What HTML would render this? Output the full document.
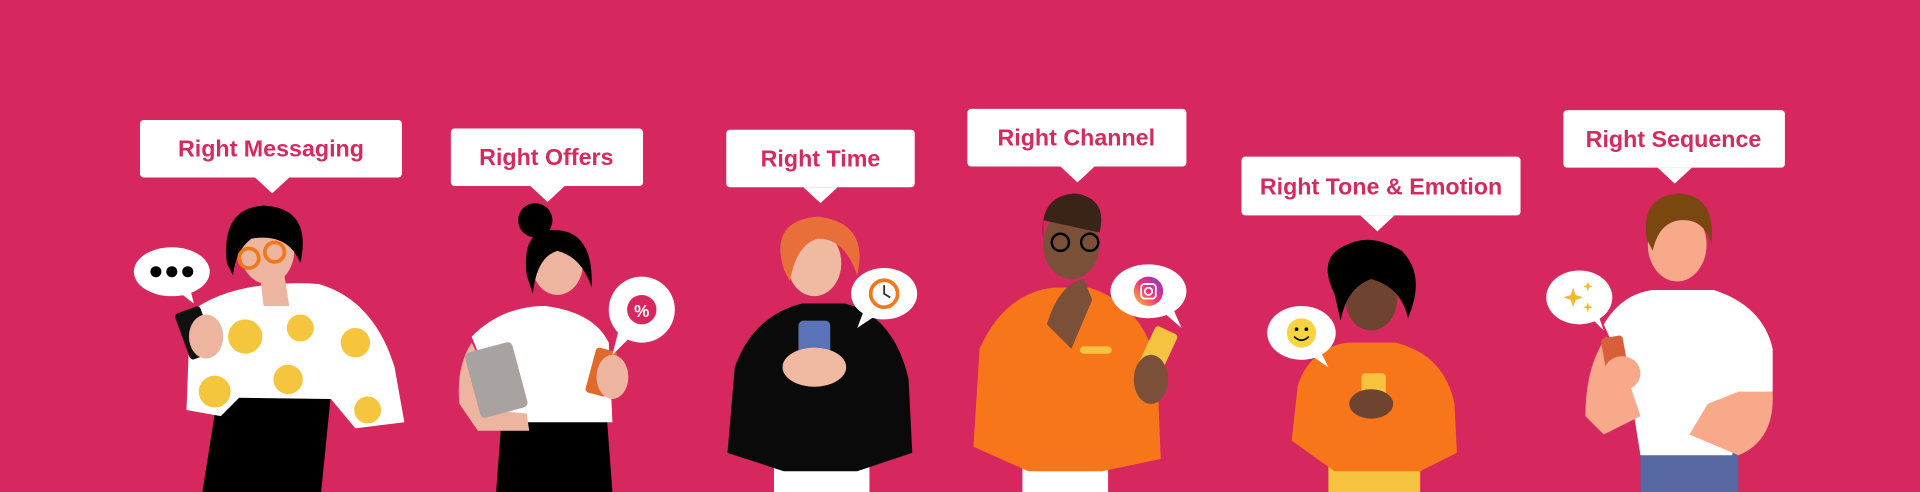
<!DOCTYPE html>
<html><head><meta charset="utf-8"><style>
html,body{margin:0;padding:0;background:#D6275F;width:1920px;height:492px;overflow:hidden}
svg{display:block}
text{font-family:"Liberation Sans",sans-serif;font-weight:bold;fill:#D42A5E;font-size:19px;text-anchor:middle}
</style></head><body>
<svg width="1920" height="492" viewBox="0 0 1568 402" xmlns="http://www.w3.org/2000/svg">
<rect width="1568" height="402" fill="#D6275F"/>
<defs>
<linearGradient id="ig" x1="0" y1="1" x2="1" y2="0"><stop offset="0" stop-color="#FDC830"/><stop offset=".5" stop-color="#F3307A"/><stop offset="1" stop-color="#7A3BD0"/></linearGradient>
</defs>
<!-- labels -->
<g fill="#fff">
<rect x="114" y="98" width="214" height="47" rx="3"/><path d="M208 145h28l-14 13z"/>
<rect x="368" y="105" width="157" height="47" rx="3"/><path d="M433 152h28l-14 13z"/>
<rect x="593" y="106" width="154" height="47" rx="3"/><path d="M656 153h28l-14 13z"/>
<rect x="790" y="89" width="179" height="47" rx="3"/><path d="M866 136h28l-14 13z"/>
<rect x="1014" y="128" width="228" height="48" rx="3"/><path d="M1111 176h28l-14 13z"/>
<rect x="1277" y="90" width="181" height="47" rx="3"/><path d="M1354 137h28l-14 13z"/>
</g>
<text x="221" y="128">Right Messaging</text>
<text x="446" y="135">Right Offers</text>
<text x="670" y="136">Right Time</text>
<text x="879" y="119">Right Channel</text>
<text x="1128" y="159">Right Tone &amp; Emotion</text>
<text x="1367" y="120">Right Sequence</text>

<!-- Figure 1 -->
<path d="M165 402 L178 320 L270 322 L262 402z" fill="#000"/>
<path d="M155 255 Q190 228 260 232 Q305 245 322 300 L330 345 L290 350 L270 326 L195 325 L180 340 L152 335z" fill="#fff"/>
<g fill="#F6C53E"><circle cx="200" cy="275" r="14"/><circle cx="245" cy="268" r="11"/><circle cx="290" cy="280" r="12"/><circle cx="175" cy="320" r="13"/><circle cx="235" cy="310" r="12"/><circle cx="300" cy="335" r="11"/></g>
<path d="M212 225 L232 225 L236 250 L215 250z" fill="#EDB5A0"/>
<ellipse cx="218" cy="205" rx="22" ry="27" fill="#EDB5A0"/>
<path d="M185 215 Q180 170 215 168 Q255 170 245 215 Q235 190 205 195 Q192 205 190 225z" fill="#000"/>
<circle cx="203" cy="211" r="8" fill="none" stroke="#F2771A" stroke-width="3"/><circle cx="224" cy="206" r="8" fill="none" stroke="#F2771A" stroke-width="3"/>
<rect x="148" y="252" width="22" height="40" rx="3" fill="#111" transform="rotate(-20 159 272)"/>
<ellipse cx="168" cy="275" rx="14" ry="18" fill="#EDB5A0"/>
<ellipse cx="140" cy="222" rx="31" ry="20" fill="#fff"/><path d="M145 238 L158 248 L155 236z" fill="#fff"/>
<g fill="#000"><circle cx="127" cy="222" r="4.5"/><circle cx="140" cy="222" r="4.5"/><circle cx="153" cy="222" r="4.5"/></g>

<!-- Figure 2 -->
<path d="M405 402 L410 335 L495 335 L500 402z" fill="#000"/>
<path d="M385 275 Q410 250 445 250 Q485 255 497 280 L500 345 L405 345 L395 300z" fill="#fff"/>
<path d="M375 330 Q372 300 385 280 L395 300 L400 335 L430 338 L432 352 L390 352z" fill="#EDB5A0"/>
<rect x="385" y="283" width="40" height="55" rx="4" fill="#A8A3A0" transform="rotate(-15 405 310)"/>
<ellipse cx="455" cy="215" rx="21" ry="26" fill="#EDB5A0"/>
<path d="M430 225 Q425 185 455 188 Q485 190 483 235 Q475 210 455 205 Q438 210 435 240z" fill="#000"/>
<circle cx="437" cy="180" r="14" fill="#000"/>
<rect x="482" y="285" width="18" height="38" rx="3" fill="#E06A2C" transform="rotate(15 491 304)"/>
<ellipse cx="500" cy="308" rx="13" ry="18" fill="#EDB5A0"/>
<circle cx="524" cy="253" r="27" fill="#fff"/><path d="M505 270 L500 290 L515 275z" fill="#fff"/>
<circle cx="524" cy="253" r="12" fill="#D6275F"/><text x="524" y="259" style="fill:#fff;font-size:14px">%</text>

<!-- Figure 3 -->
<rect x="632" y="372" width="78" height="30" fill="#fff"/>
<path d="M600 300 Q615 258 655 248 L690 248 Q730 258 742 310 L745 370 L700 385 L640 385 L594 370z" fill="#0A0A0A"/>
<ellipse cx="665" cy="215" rx="22" ry="27" fill="#F0B9A2"/>
<path d="M640 220 Q628 180 668 177 Q710 182 700 225 Q690 195 668 195 Q650 200 645 230z" fill="#E86F3A"/>
<rect x="652" y="262" width="26" height="42" rx="4" fill="#5972B8"/>
<ellipse cx="665" cy="300" rx="26" ry="16" fill="#F0B9A2"/>
<ellipse cx="722" cy="240" rx="27" ry="21" fill="#fff"/><path d="M705 255 L700 268 L715 258z" fill="#fff"/>
<circle cx="722" cy="240" r="11" fill="#fff" stroke="#F2771A" stroke-width="3"/><path d="M722 233v7l5 3" stroke="#333" stroke-width="1.5" fill="none"/>

<!-- Figure 4 -->
<rect x="835" y="375" width="70" height="27" fill="#fff"/>
<path d="M800 285 Q820 240 860 235 L890 235 Q935 250 945 300 L948 375 L900 385 L840 385 L795 365z" fill="#F7761A"/>
<rect x="882" y="283" width="26" height="6" rx="3" fill="#F5C340"/>
<ellipse cx="875" cy="200" rx="23" ry="28" fill="#7A5038"/>
<path d="M852 195 Q848 160 878 158 Q905 162 898 190 L852 180z" fill="#3A2418"/>
<circle cx="866" cy="198" r="7" fill="none" stroke="#000" stroke-width="2"/><circle cx="890" cy="198" r="7" fill="none" stroke="#000" stroke-width="2"/>
<path d="M855 265 Q865 232 885 228 L892 245 L875 285z" fill="#7A5038"/>
<rect x="935" y="268" width="20" height="40" rx="3" fill="#F5C340" transform="rotate(25 945 288)"/>
<ellipse cx="940" cy="310" rx="14" ry="20" fill="#7A5038"/>
<ellipse cx="938" cy="238" rx="31" ry="22" fill="#fff"/><path d="M950 255 L965 268 L958 252z" fill="#fff"/>
<circle cx="938" cy="238" r="12" fill="url(#ig)"/><rect x="932" y="232" width="12" height="12" rx="3" fill="none" stroke="#fff" stroke-width="1.5"/><circle cx="938" cy="238" r="3" fill="none" stroke="#fff" stroke-width="1.5"/>

<!-- Figure 5 -->
<rect x="1085" y="378" width="75" height="24" fill="#F5C340"/>
<path d="M1060 315 Q1070 285 1100 280 L1140 280 Q1180 290 1188 330 L1190 370 L1160 385 L1090 385 L1055 360z" fill="#F7761A"/>
<ellipse cx="1120" cy="245" rx="21" ry="25" fill="#6E4430"/>
<path d="M1090 240 Q1075 210 1100 200 Q1120 190 1145 205 Q1165 225 1150 260 Q1145 235 1120 228 Q1100 235 1095 262z" fill="#000"/>
<rect x="1112" y="305" width="20" height="32" rx="3" fill="#F5C340"/>
<ellipse cx="1120" cy="330" rx="18" ry="12" fill="#6E4430"/>
<ellipse cx="1063" cy="272" rx="28" ry="22" fill="#fff"/><path d="M1070 290 L1085 300 L1078 286z" fill="#fff"/>
<circle cx="1063" cy="272" r="12" fill="#F7D440"/><circle cx="1059" cy="269" r="1.5" fill="#000"/><circle cx="1067" cy="269" r="1.5" fill="#000"/><path d="M1057 275 Q1063 281 1069 275" stroke="#000" stroke-width="1.3" fill="none"/>

<!-- Figure 6 -->
<rect x="1340" y="368" width="80" height="34" fill="#5768A0"/>
<path d="M1310 265 Q1325 240 1350 237 L1400 237 Q1440 250 1448 285 L1448 320 L1420 325 L1415 372 L1340 372 L1330 310z" fill="#fff"/>
<path d="M1295 340 Q1295 300 1312 275 L1330 310 L1340 340 L1310 355z" fill="#F7A98A"/>
<path d="M1420 320 L1448 320 Q1450 360 1420 372 L1380 355 L1395 330z" fill="#F7A98A"/>
<ellipse cx="1370" cy="200" rx="24" ry="30" fill="#F7A98A"/>
<path d="M1345 195 Q1340 160 1372 158 Q1402 160 1398 200 Q1392 178 1372 180 Q1355 182 1350 205z" fill="#7A4710"/>
<rect x="1310" y="275" width="18" height="32" rx="3" fill="#D7603A" transform="rotate(-10 1319 291)"/>
<ellipse cx="1325" cy="305" rx="15" ry="14" fill="#F7A98A"/>
<ellipse cx="1290" cy="243" rx="27" ry="22" fill="#fff"/><path d="M1300 260 L1310 270 L1305 256z" fill="#fff"/>
<path d="M1285 235 l2 6 6 2 -6 2 -2 6 -2 -6 -6 -2 6 -2z" fill="#F5B82E"/><path d="M1297 230 l1 3 3 1 -3 1 -1 3 -1 -3 -3 -1 3 -1z" fill="#F5B82E"/><path d="M1297 247 l1 3 3 1 -3 1 -1 3 -1 -3 -3 -1 3 -1z" fill="#F5B82E"/>
</svg>
</body></html>
